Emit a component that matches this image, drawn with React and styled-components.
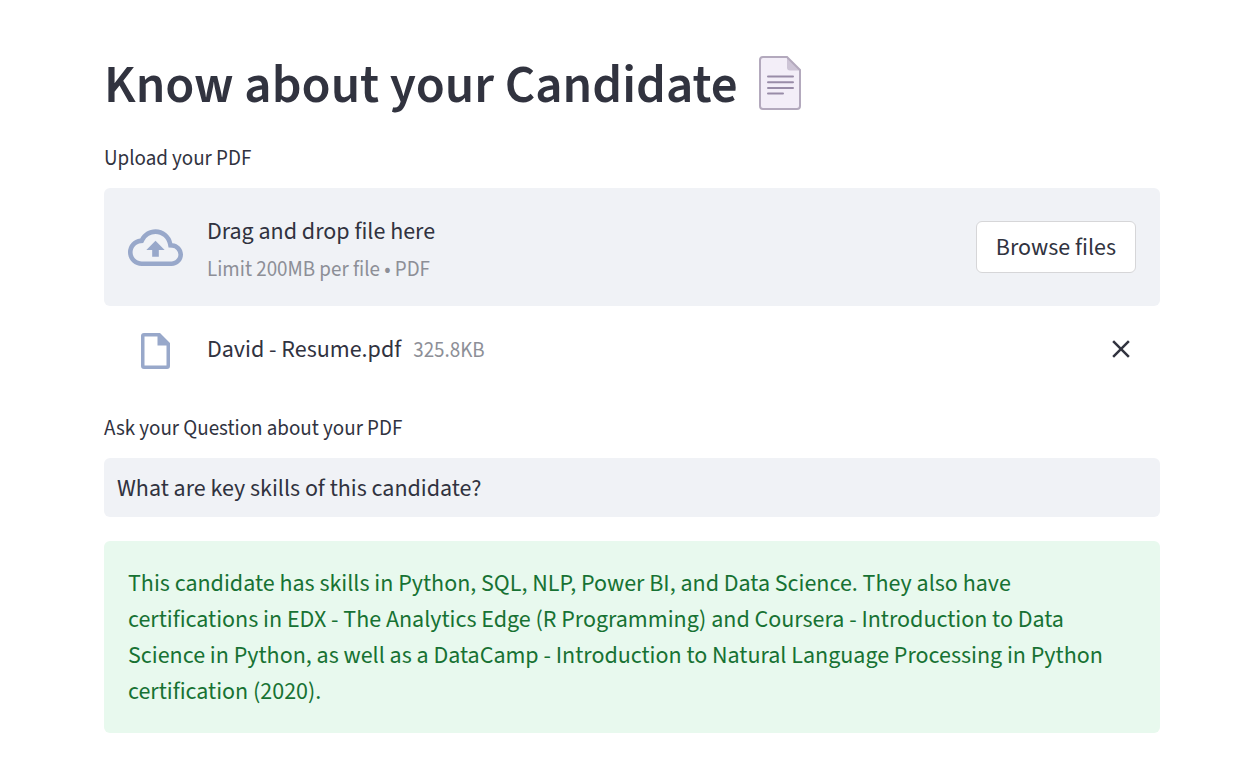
import React, { useState } from "react";
import styled, { createGlobalStyle } from "styled-components";

const GlobalStyle = createGlobalStyle`
  *, *::before, *::after { box-sizing: border-box; }
  body {
    margin: 0;
    background: #ffffff;
    color: #31333f;
    font-family: "Source Sans 3", "Noto Sans CJK SC", "Noto Sans", sans-serif;
    font-size: 24px;
    line-height: 36px;
  }
`;

const Page = styled.main`
  padding: 48px 92px 42px 104px;
`;

const Title = styled.h1`
  display: flex;
  align-items: flex-start;
  gap: 20px;
  margin: 0 0 16px;
  font-size: 53px;
  font-weight: 600;
  line-height: 76px;

  svg {
    margin-top: 7px;
  }
`;

const Label = styled.label`
  display: block;
  margin-bottom: 12px;
  font-size: 21px;
  line-height: 36px;
`;

const Dropzone = styled.section`
  display: flex;
  align-items: center;
  gap: 24px;
  padding: 22px 24px;
  border-radius: 6px;
  background: #f0f2f6;
`;

const DropText = styled.div`
  flex: 1;
  padding-top: 4px;
`;

const Hint = styled.div`
  padding-top: 4px;
  font-size: 21px;
  line-height: 30px;
  color: #8d8f97;
`;

const BrowseButton = styled.button`
  padding: 8px 19px 6px;
  border: 1px solid #d6d6d8;
  border-radius: 6px;
  background: #ffffff;
  color: inherit;
  font: inherit;
`;

const FileRow = styled.div`
  display: flex;
  align-items: center;
  margin-bottom: 16px;
  padding: 24px 24px 24px 36px;
`;

const FileName = styled.span`
  margin: 0 12px 0 36px;
`;

const FileSize = styled.span`
  flex: 1;
  font-size: 21px;
  color: #8d8f97;
`;

const RemoveButton = styled.button`
  display: flex;
  padding: 0;
  border: 0;
  background: none;
  color: #31333f;
`;

const QuestionInput = styled.input`
  display: block;
  width: 100%;
  height: 59px;
  padding: 2px 13px 0;
  border: 0;
  border-radius: 6px;
  background: #f0f2f6;
  color: inherit;
  font: inherit;
`;

const Answer = styled.div`
  margin-top: 24px;
  padding: 25px 24px 23px;
  border-radius: 6px;
  background: #e8f9ee;
  color: #177233;
`;

function PageEmoji() {
  return (
    <svg width="44" height="56" viewBox="0 0 44 56" aria-hidden="true">
      <path d="M5 2h24l13 13v36a3 3 0 0 1-3 3H5a3 3 0 0 1-3-3V5a3 3 0 0 1 3-3z" fill="#f3eef8" />
      <path d="M29 2v10.500a3 3 0 0 0 3 3H42z" fill="#cdc4d6" />
      <path d="M5 2h24l13 13v36a3 3 0 0 1-3 3H5a3 3 0 0 1-3-3V5a3 3 0 0 1 3-3z" fill="none" stroke="#b3a9bd" strokeWidth="2" />
      <path d="M10 21.500h25M10 27.200h25M10 32.900h25M10 38.500h15" stroke="#998ca8" strokeWidth="2" strokeLinecap="round" />
    </svg>
  );
}

function CloudIcon() {
  return (
    <svg width="55" height="56" viewBox="0 -0.3 24 24" fill="#98a8ca" aria-hidden="true">
      <path d="M19.35 10.04A7.49 7.49 0 0 0 12 4C9.11 4 6.6 5.64 5.35 8.04A5.994 5.994 0 0 0 0 14c0 3.31 2.69 6 6 6h13c2.76 0 5-2.24 5-5 0-2.64-2.05-4.78-4.65-4.96zM19 18H6c-2.21 0-4-1.79-4-4 0-2.05 1.53-3.76 3.56-3.97l1.07-.11.5-.95A5.469 5.469 0 0 1 12 6c2.62 0 4.88 1.86 5.39 4.43l.3 1.5 1.53.11A2.98 2.98 0 0 1 22 15c0 1.65-1.35 3-3 3zM8 13h2.55v3h2.9v-3H16l-4-4z" />
    </svg>
  );
}

function FileIcon() {
  return (
    <svg width="31" height="40" viewBox="0 -2 31 40" fill="#98a8ca" aria-hidden="true">
      <path fillRule="evenodd" d="M4 1h16l10 10v23a3 3 0 0 1-3 3H4a3 3 0 0 1-3-3V4a3 3 0 0 1 3-3zM4.500 4.500v29h22V13.500h-9v-9z" />
    </svg>
  );
}

export default function App() {
  const [question, setQuestion] = useState("What are key skills of this candidate?");
  return (
    <>
      <GlobalStyle />
      <Page>
        <Title>
          Know about your Candidate
          <PageEmoji />
        </Title>
        <Label as="div">Upload your PDF</Label>
        <Dropzone aria-label="Upload your PDF">
          <CloudIcon />
          <DropText>
            <div>Drag and drop file here</div>
            <Hint>Limit 200MB per file • PDF</Hint>
          </DropText>
          <BrowseButton type="button">Browse files</BrowseButton>
        </Dropzone>
        <FileRow>
          <FileIcon />
          <FileName>David - Resume.pdf</FileName>
          <FileSize>325.8KB</FileSize>
          <RemoveButton type="button" aria-label="Remove file">
            <svg width="30" height="30" viewBox="0 0.8 24 24" fill="currentColor" aria-hidden="true">
              <path d="M19 6.41L17.59 5 12 10.59 6.41 5 5 6.41 10.59 12 5 17.59 6.41 19 12 13.41 17.59 19 19 17.59 13.41 12z" />
            </svg>
          </RemoveButton>
        </FileRow>
        <Label htmlFor="question">Ask your Question about your PDF</Label>
        <QuestionInput id="question" type="text" value={question} onChange={(e) => setQuestion(e.target.value)} />
        <Answer role="status">
          This candidate has skills in Python, SQL, NLP, Power BI, and Data Science. They also have certifications in EDX - The Analytics Edge (R Programming) and Coursera - Introduction to Data Science in Python, as well as a DataCamp - Introduction to Natural Language Processing in Python certification (2020).
        </Answer>
      </Page>
    </>
  );
}
